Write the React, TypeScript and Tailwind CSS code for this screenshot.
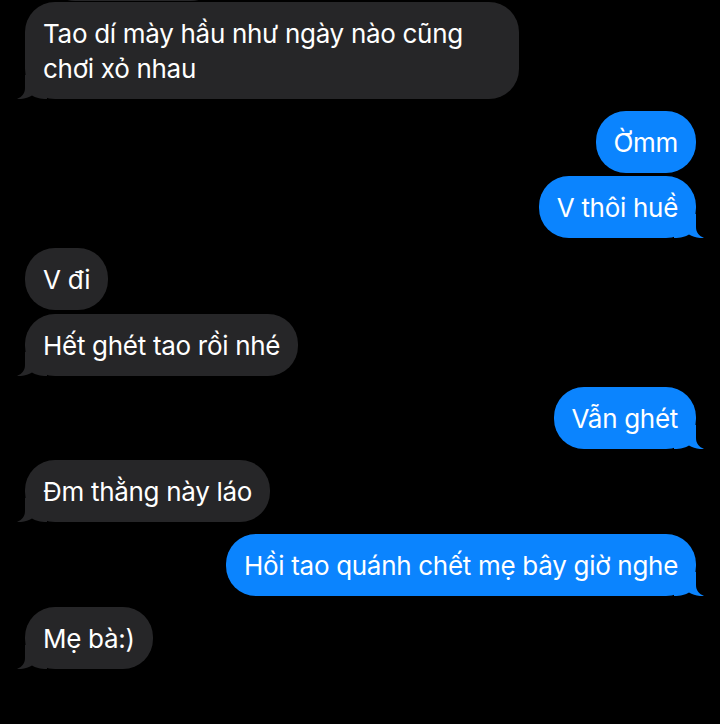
import React from "react";

type Msg = { text: string; me: boolean; tail: boolean; gap: number };

const messages: Msg[] = [
  { text: "Tao dí mày hầu như ngày nào cũng chơi xỏ nhau", me: false, tail: true, gap: 1 },
  { text: "Ờmm", me: true, tail: false, gap: 12 },
  { text: "V thôi huề", me: true, tail: true, gap: 3 },
  { text: "V đi", me: false, tail: false, gap: 10 },
  { text: "Hết ghét tao rồi nhé", me: false, tail: true, gap: 4 },
  { text: "Vẫn ghét", me: true, tail: true, gap: 11 },
  { text: "Đm thằng này láo", me: false, tail: true, gap: 11 },
  { text: "Hồi tao quánh chết mẹ bây giờ nghe", me: true, tail: true, gap: 12 },
  { text: "Mẹ bà:)", me: false, tail: true, gap: 11 },
];

// tail drawn for a left bubble, mirrored for the right side
const Tail = ({ me }: { me: boolean }) => (
  <svg
    width="30"
    height="24"
    viewBox="0 0 30 24"
    className={`absolute bottom-0 ${me ? "-right-[8px] -scale-x-100" : "-left-[8px]"}`}
  >
    <path
      d="M8 0 L8 13 C8 18.5 5 21.8 0 24 C6 24.4 11 23 15 20.5 C18.5 22.6 23 24 30 24 L30 0 Z"
      fill={me ? "#0b84fe" : "#262628"}
    />
  </svg>
);

const Bubble = ({ msg }: { msg: Msg }) => (
  <div
    className={`flex ${msg.me ? "justify-end" : "justify-start"}`}
    style={{ marginTop: msg.gap }}
  >
    <div
      className={`relative max-w-[494px] rounded-[30px] px-[18px] py-[13.5px] text-[26px] leading-[35px] tracking-[-0.3px] text-white ${
        msg.me ? "bg-[#0b84fe]" : "bg-[#262628]"
      }`}
    >
      {msg.tail && <Tail me={msg.me} />}
      <span className="relative">{msg.text}</span>
    </div>
  </div>
);

export default function App() {
  return (
    <div
      className="h-[724px] w-[720px] overflow-hidden bg-black pl-[25px] pr-[24px]"
      style={{ fontFamily: "Inter, 'Noto Sans', sans-serif" }}
    >
      {/* bottom of the previous bubble, scrolled off */}
      <div className="-mt-[60px] ml-[20px] h-[61px] w-[176px] rounded-[30px] bg-[#262628]" />
      {messages.map((m, i) => (
        <Bubble key={i} msg={m} />
      ))}
    </div>
  );
}
